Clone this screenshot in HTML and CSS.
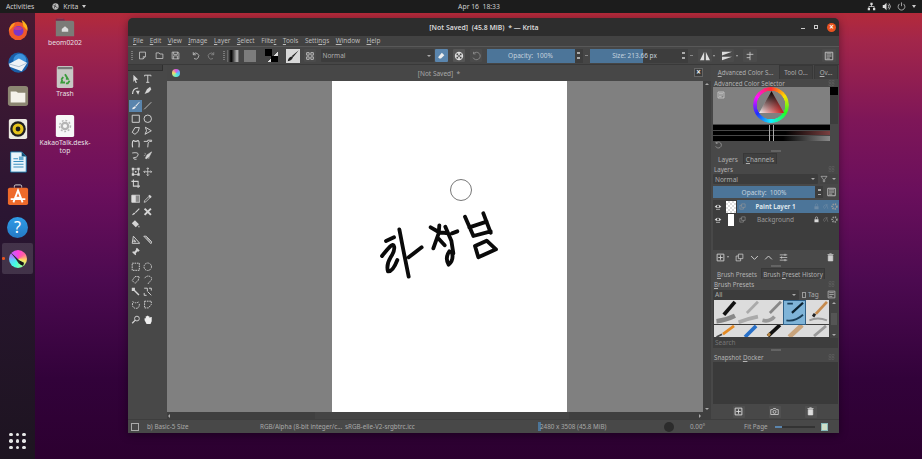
FILE: index.html
```html
<!DOCTYPE html>
<html lang="en">
<head>
<meta charset="utf-8">
<title>Krita</title>
<link rel="stylesheet" href="styles.css">
</head>
<body>
<svg class="defs" aria-hidden="true">
  <defs>
    <symbol id="i-new" viewBox="0 0 12 12"><path d="M2 1.500h8v6l-3 3H2zM7 10.500V7.500h3" fill="none" stroke="currentColor"/></symbol>
    <symbol id="i-open" viewBox="0 0 12 12"><path d="M1.500 2.500h4l1 1.500h4v6h-9z" fill="none" stroke="currentColor"/></symbol>
    <symbol id="i-save" viewBox="0 0 12 12"><path d="M1.500 1.500h8l1 1v8h-9zM3.500 1.500v3h5v-3M3.500 10.500v-4h5v4" fill="none" stroke="currentColor"/></symbol>
    <symbol id="i-undo" viewBox="0 0 12 12"><path d="M3 4.500a4 4 0 1 1 1 5.500M3 1.500v3.500h3.500" fill="none" stroke="currentColor"/></symbol>
    <symbol id="i-redo" viewBox="0 0 12 12"><path d="M9 4.500a4 4 0 1 0-1 5.500M9 1.500v3.500H5.500" fill="none" stroke="currentColor"/></symbol>
    <symbol id="i-grid" viewBox="0 0 12 12"><path d="M2 2h3v3H2zM7 2h3v3H7zM2 7h3v3H2zM7 7h3v3H7z" fill="none" stroke="currentColor"/></symbol>
    <symbol id="i-eye" viewBox="0 0 12 12"><path d="M1 5.500Q6 0 11 5.500Q6 9 1 5.500z" fill="currentColor"/><circle cx="6" cy="5" r="1.600" fill="#333"/><path d="M3 9.500h6" stroke="currentColor"/></symbol>
    <symbol id="i-lock" viewBox="0 0 12 12"><path d="M2.500 5.500h7v5h-7z" fill="currentColor"/><path d="M4 5.500V3.500a2 2 0 0 1 4 0v2" fill="none" stroke="currentColor"/></symbol>
    <symbol id="i-alpha" viewBox="0 0 12 12"><path d="M10 3Q6 2 3.500 4.500T4 9.500Q6.500 9 8 3l2 7" fill="none" stroke="currentColor"/></symbol>
    <symbol id="i-dots" viewBox="0 0 12 12"><circle cx="6" cy="6" r="4" fill="none" stroke="currentColor" stroke-dasharray="2 1.500" stroke-width="3"/></symbol>
    <symbol id="i-trash" viewBox="0 0 12 12"><path d="M3 3.500h6v7H3zM2 2h8M4.500 1h3" fill="currentColor" stroke="currentColor"/></symbol>
    <symbol id="i-plusbox" viewBox="0 0 12 12"><path d="M1.500 1.500h9v9h-9zM6 3v6M3 6h6" fill="none" stroke="currentColor" stroke-width="1.200"/></symbol>
    <symbol id="i-cam" viewBox="0 0 12 12"><path d="M1 3.500h2.500l1-1.500h3l1 1.500H11v6.500H1z" fill="none" stroke="currentColor"/><circle cx="6" cy="6.500" r="2" fill="none" stroke="currentColor"/></symbol>
    <symbol id="i-dock" viewBox="0 0 12 12"><path d="M1 1h4v4H1zM7 1h4v4H7zM1 7h4v4H1zM7 7h4v4H7z" fill="none" stroke="currentColor" stroke-dasharray="1.200 .8"/></symbol>
    <symbol id="i-refresh" viewBox="0 0 12 12"><path d="M2.500 8A4.500 4.500 0 1 0 3 3.200M3 1v2.500h2.500" fill="none" stroke="currentColor"/></symbol>
    <symbol id="i-copy" viewBox="0 0 12 12"><path d="M4.500 1.500h6v6h-6zM4.500 4h-3v6.500h6v-3" fill="none" stroke="currentColor"/></symbol>
    <symbol id="i-down" viewBox="0 0 12 12"><path d="M1.500 4l4.500 4.500L10.500 4" fill="none" stroke="currentColor" stroke-width="1.300"/></symbol>
    <symbol id="i-up" viewBox="0 0 12 12"><path d="M1.500 8.500L6 4l4.500 4.500" fill="none" stroke="currentColor" stroke-width="1.300"/></symbol>
    <symbol id="i-props" viewBox="0 0 12 12"><path d="M1 2.500h10M1 6h10M1 9.500h10M8 1v3M3.500 4.500v3M8 8v3" fill="none" stroke="currentColor"/></symbol>
    <symbol id="i-filter" viewBox="0 0 12 12"><path d="M1.500 2h9L7 6.500V10H5V6.500z" fill="none" stroke="currentColor"/></symbol>
    <symbol id="i-panel" viewBox="0 0 12 12"><path d="M1.500 1.500h9v9h-9zM3 3.500h6M3 6h6M3 8.500h4" fill="none" stroke="currentColor"/></symbol>

    <symbol id="t-arrow" viewBox="0 0 12 12"><path d="M3 1l6 6-3 .5 1.500 3.500-1.500.5L4.500 8 3 10z" fill="currentColor"/></symbol>
    <symbol id="t-text" viewBox="0 0 12 12"><path d="M2 3V1.500h8V3M6 1.500V10.500M4 10.500h4" fill="none" stroke="currentColor" stroke-width="1.200"/></symbol>
    <symbol id="t-bez" viewBox="0 0 12 12"><path d="M2 10Q2 3 9 2.500" fill="none" stroke="currentColor" stroke-width="1.500"/><path d="M6 6l5 0-2 5z" fill="currentColor"/></symbol>
    <symbol id="t-cal" viewBox="0 0 12 12"><path d="M2 10L5 4l4-3 1.500 3-3 4z" fill="currentColor"/></symbol>
    <symbol id="t-brush" viewBox="0 0 12 12"><path d="M10.500 1L5.500 6l1 1 4.500-5.500zM5 6.500L2 8.500 1.500 10.500 4 10l2.500-2.500z" fill="#eee"/></symbol>
    <symbol id="t-line" viewBox="0 0 12 12"><path d="M1.500 10.500l9-9" stroke="currentColor"/></symbol>
    <symbol id="t-rect" viewBox="0 0 12 12"><path d="M1.500 1.500h9v9h-9z" fill="none" stroke="currentColor" stroke-width="1.200"/></symbol>
    <symbol id="t-ell" viewBox="0 0 12 12"><circle cx="6" cy="6" r="4.700" fill="none" stroke="currentColor" stroke-width="1.200"/></symbol>
    <symbol id="t-poly" viewBox="0 0 12 12"><path d="M1.500 8L5 2h5.500L9 7l-4 3.500z" fill="none" stroke="currentColor" stroke-width="1.200"/></symbol>
    <symbol id="t-pline" viewBox="0 0 12 12"><path d="M3 1.500l7.500 4.500-8 4.500 2-4.500z" fill="none" stroke="currentColor" stroke-width="1.200"/></symbol>
    <symbol id="t-curve" viewBox="0 0 12 12"><path d="M2 10.500Q1 3 3 2q3 2 6 0 2 1 1 8.500" fill="none" stroke="currentColor" stroke-width="1.500"/></symbol>
    <symbol id="t-free" viewBox="0 0 12 12"><path d="M1 3h5V1.500h5V3H8.500L6.500 5 6 10.500" fill="none" stroke="currentColor" stroke-width="1.200"/></symbol>
    <symbol id="t-dyna" viewBox="0 0 12 12"><path d="M1.500 2.500Q10 1 9 5T3 8.500Q3 11 7 10.500" fill="none" stroke="currentColor" stroke-width="1.100"/></symbol>
    <symbol id="t-multi" viewBox="0 0 12 12"><path d="M11 1L5 5 3 9l1 1 4-3zM1 6l2-1M2 3l2 1M7 10l1-2" fill="currentColor" stroke="currentColor" stroke-width=".7"/></symbol>
    <symbol id="t-trans" viewBox="0 0 12 12"><path d="M2.500 2.500h7v7h-7z" fill="none" stroke="currentColor"/><path d="M1 1h3v3H1zM8 1h3v3H8zM1 8h3v3H1zM8 8h3v3H8zM5 5h2v2H5z" fill="currentColor"/></symbol>
    <symbol id="t-move" viewBox="0 0 12 12"><path d="M6 1v10M1 6h10M4.500 2.500L6 1l1.500 1.500M4.500 9.500L6 11l1.500-1.500M2.500 4.500L1 6l1.500 1.500M9.500 4.500L11 6 9.500 7.500" fill="none" stroke="currentColor"/></symbol>
    <symbol id="t-crop" viewBox="0 0 12 12"><path d="M3 .5V9h8.500M.5 3H9v8.500" fill="none" stroke="currentColor" stroke-width="1.300"/></symbol>
    <symbol id="t-grad" viewBox="0 0 12 12"><path d="M1 1.500h10v9H1z" fill="#888" stroke="currentColor"/><path d="M1 1.500h5v9H1z" fill="#ddd"/></symbol>
    <symbol id="t-drop" viewBox="0 0 12 12"><path d="M1.500 10.500L2 8.500l5-5 1.500 1.500-5 5z" fill="none" stroke="currentColor"/><path d="M6.500 2.500l3 3L11 3.500 8.500 1z" fill="currentColor"/></symbol>
    <symbol id="t-color" viewBox="0 0 12 12"><path d="M10 1.500L5 6.500l1 1 5-5zM4 7L1.500 9.500 2 10.500 5.500 8.500z" fill="currentColor"/></symbol>
    <symbol id="t-patch" viewBox="0 0 12 12"><path d="M2 2l8 8M10 2l-8 8" stroke="currentColor" stroke-width="2.500"/></symbol>
    <symbol id="t-fill" viewBox="0 0 12 12"><path d="M5 1.500l5 5-4 4-5-5zM10 8l1 2.500h-2z" fill="currentColor"/></symbol>
    <symbol id="t-assist" viewBox="0 0 12 12"><path d="M1.500 10.500L3 1.500l8 9zM3.500 8.500h2.500l-2-2.500z" fill="none" stroke="currentColor" stroke-width="1.200"/></symbol>
    <symbol id="t-meas" viewBox="0 0 12 12"><path d="M1 1.500h3l7 7-1 2.500zM4 3L9.500 9" fill="none" stroke="currentColor" stroke-width="1.200"/></symbol>
    <symbol id="t-ref" viewBox="0 0 12 12"><path d="M7.500 1L11 4.500 9.500 6 8.500 5.500 6 8l.5 1.500-1 1-4-4 1-1L4 6l2.500-2.500L6 2.500zM3 8L1 11" fill="currentColor"/></symbol>
    <symbol id="s-rect" viewBox="0 0 12 12"><path d="M1.500 1.500h9v9h-9z" fill="none" stroke="currentColor" stroke-dasharray="2 1" stroke-width="1.200"/></symbol>
    <symbol id="s-ell" viewBox="0 0 12 12"><circle cx="6" cy="6" r="4.700" fill="none" stroke="currentColor" stroke-dasharray="2 1" stroke-width="1.200"/></symbol>
    <symbol id="s-poly" viewBox="0 0 12 12"><path d="M1.500 7L5 2h5.500L9 7l-4 3.500z" fill="none" stroke="currentColor" stroke-dasharray="2 1" stroke-width="1.200"/></symbol>
    <symbol id="s-free" viewBox="0 0 12 12"><path d="M2 4Q5 0 9 2t0 6 -2 3" fill="none" stroke="currentColor" stroke-dasharray="2 1" stroke-width="1.200"/></symbol>
    <symbol id="s-wand" viewBox="0 0 12 12"><path d="M1 1h4v4H1z" fill="currentColor"/><path d="M4 4l6 6" stroke="currentColor" stroke-width="1.800"/></symbol>
    <symbol id="s-sim" viewBox="0 0 12 12"><path d="M1.500 1.500h4v4M6 6l4.500 4.500M7.500 1.500h3v3M1.500 7.500v3h3" fill="none" stroke="currentColor" stroke-width="1.200"/></symbol>
    <symbol id="s-bez" viewBox="0 0 12 12"><path d="M2 4Q1 10 6 10.500T10.500 4M2 2q4 3 8.500 0" fill="none" stroke="currentColor" stroke-dasharray="2 1" stroke-width="1.200"/></symbol>
    <symbol id="s-mag" viewBox="0 0 12 12"><path d="M2 1.500h8.500v4L7 10H2z" fill="none" stroke="currentColor" stroke-dasharray="2 1" stroke-width="1.200"/></symbol>
    <symbol id="t-zoom" viewBox="0 0 12 12"><circle cx="7.500" cy="4.500" r="3" fill="none" stroke="currentColor" stroke-width="1.200"/><path d="M5.500 6.500L1.500 10.500" stroke="currentColor" stroke-width="1.600"/></symbol>
    <symbol id="t-pan" viewBox="0 0 12 12"><path d="M2 6.500V4h1.500V1.500H5V1h1.500v.5H8V3h1.500v-.5H11V8l-1.500 3.500h-5z" fill="#eee"/></symbol>
  </defs>
</svg>

<header class="topbar">
  <div class="top-left">
    <span class="top-item">Activities</span>
    <span class="top-item app">
      <svg class="app-globe" viewBox="0 0 10 10"><circle cx="5" cy="5" r="4.500" fill="#bbb"/><path d="M2 3l6 4M3 8l2-6" stroke="#333"/></svg>
      Krita <i class="caret"></i>
    </span>
  </div>
  <div class="top-clock">Apr 16&nbsp; 18:33</div>
  <div class="top-right">
    <svg class="tray" viewBox="0 0 12 12"><path d="M4.500 1h3v3h-3zM1 8h3v3H1zM8 8h3v3H8z" fill="#ddd"/><path d="M6 4v2M2.500 8V6h7v2" stroke="#ddd" fill="none"/></svg>
    <svg class="tray" viewBox="0 0 12 12"><path d="M1 4h2l3-3v10L3 8H1z" fill="#ddd"/><path d="M8 3.500a4 4 0 0 1 0 5M9.500 2a6 6 0 0 1 0 8" stroke="#ddd" fill="none"/></svg>
    <svg class="tray" viewBox="0 0 12 12"><path d="M3.500 2.500a4.500 4.500 0 1 0 5 0M6 .5v5" stroke="#ccc" fill="none"/></svg>
    <i class="caret"></i>
  </div>
</header>

<div class="screen">
  <nav class="dock">
    <div class="dock-item"><svg viewBox="0 0 24 24"><circle cx="12" cy="13" r="10" fill="#f0592b"/><path d="M16 1q7 4 6.500 12L18 8z" fill="#ffb31a"/><path d="M2 13Q3 5 9 4l-2 4z" fill="#ff9b1f"/><circle cx="12.500" cy="13" r="5.500" fill="#7b36c9"/><path d="M7 10q5-3 10 0l-2 2H9z" fill="#c23a90"/></svg></div>
    <div class="dock-item"><svg viewBox="0 0 24 24"><circle cx="12.500" cy="11.500" r="11" fill="#1a5fa8"/><circle cx="14" cy="9" r="7" fill="#3c93dc"/><path d="M2 13l11-6 9 5-6 9-13-5z" fill="#eef2f6"/><path d="M2 13l11 3 9-4" fill="none" stroke="#a9bdd0"/></svg></div>
    <div class="dock-item"><svg viewBox="0 0 24 24"><rect x="1" y="1" width="22" height="22" rx="3" fill="#8c8672"/><path d="M4 7h6l2 1.500h8V19H4z" fill="#f4f1ea"/></svg></div>
    <div class="dock-item"><svg viewBox="0 0 24 24"><rect x="2" y="1" width="20" height="22" rx="2" fill="#eceae2"/><circle cx="12" cy="12" r="8.500" fill="#1e1e1e"/><circle cx="12" cy="12" r="6" fill="#e6c41c"/><circle cx="12" cy="12" r="2.600" fill="#1e1e1e"/></svg></div>
    <div class="dock-item"><svg viewBox="0 0 24 24"><path d="M4 1h12l5 5v17H4z" fill="#e9f4fb" stroke="#1c78ad"/><path d="M16 1l5 5h-5z" fill="#0d4f78"/><path d="M7 8h5v1H7zM7 11h11v1H7zM7 14h11v1H7zM7 17h11v1H7z" fill="#3c8fc0"/><path d="M13 6h5v4h-5z" fill="#65a9d0"/></svg></div>
    <div class="dock-item"><svg viewBox="0 0 24 24"><path d="M8 4V2.500a1.500 1.500 0 0 1 1.500-1.500h5A1.500 1.500 0 0 1 16 2.500V4" fill="none" stroke="#ddd"/><rect x="1" y="4" width="22" height="19" rx="2" fill="#ee6a2b"/><path d="M7 20l5-13 5 13M8 15h8M4 16.500h16" stroke="#fff" stroke-width="2" fill="none"/></svg></div>
    <div class="dock-item help"><span class="help-mark">?</span></div>
    <div class="dock-item active"><i class="run-dot"></i><span class="krita-wheel"><svg viewBox="0 0 24 24"><path d="M1 2l13 12 5 4-1 3-5-3-4-6z" fill="#2b2b2b"/><path d="M14 14l6 3-1 4-4-2z" fill="#111"/></svg></span></div>
    <div class="dock-spacer"></div>
    <div class="apps-grid"><i></i><i></i><i></i><i></i><i></i><i></i><i></i><i></i><i></i></div>
  </nav>

  <main class="desktop">
    <div class="desk-icons">
      <div class="desk-icon">
        <svg class="desk-pic" viewBox="0 0 24 24"><path d="M2 4Q2 2 4 2h6l2 2h8q2 0 2 2v15H2z" fill="#7b7b77"/><path d="M2 2h9l1 2H2z" fill="#7d2a4c"/><path d="M8.500 13l3.500-3 3.500 3v3h-7z" fill="#ddd"/></svg>
        <span>beom0202</span>
      </div>
      <div class="desk-icon">
        <svg class="desk-pic" viewBox="0 0 24 24"><rect x="3" y="0" width="18" height="24" rx="2" fill="#c8c8c4"/><rect x="4" y="1" width="16" height="2.500" fill="#777"/><path d="M12 9l3 5h-2M9 15l-1 3h4M17 16l-2 3h-2M10 12l-2 3" stroke="#3a9b3a" stroke-width="2" fill="none"/></svg>
        <span>Trash</span>
      </div>
      <div class="desk-icon kakao">
        <svg class="desk-pic" viewBox="0 0 24 24"><rect x="2" y="0" width="20" height="24" rx="2" fill="#f7f7f7"/><circle cx="12" cy="12" r="3.500" fill="none" stroke="#b5b5b5" stroke-width="2.500"/><circle cx="12" cy="12" r="6" fill="none" stroke="#b5b5b5" stroke-width="1.500" stroke-dasharray="2 2"/></svg>
        <span>KakaoTalk.desk-<br>top</span>
      </div>
    </div>

    <section class="window">
      <div class="titlebar">
        <span class="title">[Not Saved]&nbsp; (45.8 MiB)&nbsp; * — Krita</span>
        <div class="win-btns">
          <i class="wb-min"></i><i class="wb-max"></i>
          <span class="wb-close">×</span>
        </div>
      </div>
      <div class="menubar">
        <span><u>F</u>ile</span><span><u>E</u>dit</span><span><u>V</u>iew</span><span><u>I</u>mage</span><span><u>L</u>ayer</span><span><u>S</u>elect</span><span>Filte<u>r</u></span><span><u>T</u>ools</span><span>Setti<u>n</u>gs</span><span><u>W</u>indow</span><span><u>H</u>elp</span>
      </div>
      <div class="toolbar">
        <i class="grip"></i>
        <svg class="tb-ic tb-first"><use href="#i-new"/></svg>
        <svg class="tb-ic"><use href="#i-open"/></svg>
        <svg class="tb-ic"><use href="#i-save"/></svg>
        <svg class="tb-ic tb-sep"><use href="#i-undo"/></svg>
        <svg class="tb-ic dim"><use href="#i-redo"/></svg>
        <i class="grip grip2"></i>
        <i class="tb-swatch tb-grad"></i>
        <i class="tb-swatch tb-patt"></i>
        <span class="fgbg"><i class="fg"></i><i class="bg"></i></span>
        <span class="tb-preset"><svg viewBox="0 0 12 12"><path d="M11 1L5 6l1 1zM5 6.500Q2 7 1.500 10.500 5 10 6 7z" fill="#222"/></svg></span>
        <span class="tb-btn"><svg class="tb-ic"><use href="#i-grid"/></svg></span>
        <span class="combo tb-combo">Normal<i class="dn"></i></span>
        <span class="tb-btn blue"><svg viewBox="0 0 12 12"><path d="M7 2l3 3-4 4H4L2.500 7.500z" fill="#eee"/></svg></span>
        <span class="tb-btn lift"><svg viewBox="0 0 12 12"><circle cx="6" cy="6" r="5" fill="#ddd"/><path d="M3 3h2v2H3zM7 3h2v2H7zM5 5h2v2H5zM3 7h2v2H3zM7 7h2v2H7z" fill="#444"/></svg></span>
        <span class="tb-btn"><svg class="tb-ic dim"><use href="#i-refresh"/></svg></span>
        <span class="slider op">Opacity:&nbsp; 100%</span><span class="spin"><i></i><i></i></span><b class="dash"></b>
        <span class="slider size"><i class="size-fill"></i><span>Size: 213.66 px</span></span><span class="spin"><i></i><i></i></span><b class="dash"></b>
        <span class="tb-btn mirror"><svg viewBox="0 0 14 12"><path d="M6 1v10H1zM8 1v10h5z" fill="#ddd"/></svg></span><i class="dn sm"></i>
        <span class="tb-btn mirror"><svg viewBox="0 0 14 12"><path d="M1 1h12L1 5.500zM1 7h12L1 11z" fill="#ddd"/></svg></span><i class="dn sm"></i>
        <span class="tb-btn mirror"><svg viewBox="0 0 14 12"><path d="M7 1v10M3 4h8M3 8h4" stroke="#ccc" fill="none"/></svg></span>
        <span class="tb-spring"></span>
        <span class="tb-btn mirror"><svg class="tb-ic"><use href="#i-panel"/></svg></span>
      </div>

      <div class="work">
        <aside class="tools">
          <div class="tools-tab"></div>
          <div class="tgroup">
            <svg><use href="#t-arrow"/></svg><svg><use href="#t-text"/></svg>
            <svg><use href="#t-bez"/></svg><svg><use href="#t-cal"/></svg>
          </div>
          <div class="tgroup">
            <span class="t-on"><svg><use href="#t-brush"/></svg></span><svg><use href="#t-line"/></svg>
            <svg><use href="#t-rect"/></svg><svg><use href="#t-ell"/></svg>
            <svg><use href="#t-poly"/></svg><svg><use href="#t-pline"/></svg>
            <svg><use href="#t-curve"/></svg><svg><use href="#t-free"/></svg>
            <svg><use href="#t-dyna"/></svg><svg><use href="#t-multi"/></svg>
          </div>
          <div class="tgroup">
            <svg><use href="#t-trans"/></svg><svg><use href="#t-move"/></svg>
            <svg><use href="#t-crop"/></svg>
          </div>
          <div class="tgroup">
            <svg><use href="#t-grad"/></svg><svg><use href="#t-drop"/></svg>
            <svg><use href="#t-color"/></svg><svg><use href="#t-patch"/></svg>
            <svg><use href="#t-fill"/></svg>
          </div>
          <div class="tgroup">
            <svg><use href="#t-assist"/></svg><svg><use href="#t-meas"/></svg>
            <svg><use href="#t-ref"/></svg>
          </div>
          <div class="tgroup">
            <svg><use href="#s-rect"/></svg><svg><use href="#s-ell"/></svg>
            <svg><use href="#s-poly"/></svg><svg><use href="#s-free"/></svg>
            <svg><use href="#s-wand"/></svg><svg><use href="#s-sim"/></svg>
            <svg><use href="#s-bez"/></svg><svg><use href="#s-mag"/></svg>
          </div>
          <div class="tgroup">
            <svg><use href="#t-zoom"/></svg><svg><use href="#t-pan"/></svg>
          </div>
        </aside>

        <div class="center">
          <div class="tabbar">
            <i class="tab-ic"></i>
            <span class="tab-name">[Not Saved] &nbsp;*</span>
            <span class="tab-close">×</span>
          </div>
          <div class="canvas-row">
            <div class="canvas">
              <div class="page">
                <svg class="cursor" viewBox="0 0 24 24"><circle cx="12" cy="12" r="10.500" fill="none" stroke="#777"/></svg>
                <svg class="ink" viewBox="0 0 420 345">
                  <path d="M48 213L72 202M36 258Q50 240 60 230T72 228Q76 240 62 262 48 285 54 304 68 306 82 270M88 178L100 240 116 320M116 262L155 232"/>
                  <path d="M182 172L206 186 234 190M208 166L206 190 190 235M206 206L224 226M226 170L244 212 250 250M246 190L262 184M238 244Q224 264 236 284 252 270 246 248"/>
                  <path d="M285 140L310 197M340 130L362 188M298 172L350 155M310 198L362 184M315 228L325 262 378 238 350 212 315 228"/>
                </svg>
              </div>
            </div>
            <div class="vscroll"><i class="arr-up"></i><i class="arr-dn"></i></div>
          </div>
          <div class="hscroll"><i class="arr-l"></i><i class="thumb"></i><i class="arr-r"></i></div>
        </div>

        <aside class="panel">
          <div class="tabs tabs-top">
            <span class="tab cur"><span><u>A</u>dvanced Color S...</span></span>
            <span class="tab">Tool O...</span>
            <span class="tab"><u>O</u>v...</span>
          </div>
          <div class="dock-head h-8"><span><u>A</u>dvanced Color Selector</span><svg><use href="#i-dock"/></svg></div>
          <div class="selector">
            <div class="sel-main">
              <svg class="sel-menu"><use href="#i-panel"/></svg>
              <div class="wheel"></div>
              <svg class="tri" viewBox="0 0 26 23">
                <defs>
                  <linearGradient id="tg1" x1="0" x2="1" y1="0" y2="0"><stop offset="0" stop-color="#f4f4f4"/><stop offset="1" stop-color="#d01818"/></linearGradient>
                  <linearGradient id="tg2" x1="0" x2="0" y1="0" y2="1"><stop offset="0" stop-color="#000"/><stop offset="1" stop-color="#000" stop-opacity="0"/></linearGradient>
                </defs>
                <path d="M13 0L26 23H0z" fill="url(#tg1)"/><path d="M13 0L26 23H0z" fill="url(#tg2)"/>
              </svg>
            </div>
            <div class="sel-side"></div>
          </div>
          <div class="sel-bars">
            <i class="bar b1"></i><i class="bar b2"></i><i class="bar b3"></i>
            <i class="bar-mark"></i>
          </div>
          <div class="sel-foot"><svg><use href="#i-refresh"/></svg></div>
          <i class="handle"></i>

          <div class="tabs tabs-mid">
            <span class="tab cur">Layers</span>
            <span class="tab"><u>C</u>hannels</span>
          </div>
          <div class="dock-head h-10"><span>Layers</span><svg><use href="#i-dock"/></svg></div>
          <div class="layer-opts">
            <span class="combo lay-combo">Normal<i class="dn"></i></span>
            <span class="filter"><svg><use href="#i-filter"/></svg><i class="dn"></i></span>
          </div>
          <div class="lay-op">
            <span class="slider lay-slider">Opacity:&nbsp; 100%</span>
            <span class="spin"><i></i><i></i></span>
            <svg class="lay-panel"><use href="#i-panel"/></svg>
          </div>
          <div class="layers">
            <div class="layer sel">
              <svg class="eye"><use href="#i-eye"/></svg>
              <span class="thumbn check"></span>
              <svg class="lic"><use href="#i-copy"/></svg>
              <span class="lname strong">Paint Layer 1</span>
              <svg class="lic dimmer"><use href="#i-lock"/></svg>
              <svg class="lic dimmer"><use href="#i-alpha"/></svg>
              <svg class="lic"><use href="#i-dots"/></svg>
            </div>
            <div class="layer">
              <svg class="eye"><use href="#i-eye"/></svg>
              <span class="thumbn white"></span>
              <svg class="lic"><use href="#i-copy"/></svg>
              <span class="lname">Background</span>
              <svg class="lic bright"><use href="#i-lock"/></svg>
              <svg class="lic dimmer"><use href="#i-alpha"/></svg>
              <svg class="lic"><use href="#i-dots"/></svg>
            </div>
          </div>
          <div class="lay-actions">
            <svg><use href="#i-plusbox"/></svg><i class="dn sm"></i>
            <svg><use href="#i-copy"/></svg>
            <svg><use href="#i-down"/></svg>
            <svg><use href="#i-up"/></svg>
            <svg><use href="#i-props"/></svg>
            <span class="tb-spring"></span>
            <svg><use href="#i-trash"/></svg>
          </div>
          <i class="handle"></i>

          <div class="tabs tabs-brush">
            <span class="tab cur"><span><u>B</u>rush Presets</span></span>
            <span class="tab"><span>Brush <u>P</u>reset History</span></span>
          </div>
          <div class="dock-head h-10"><span><u>B</u>rush Presets</span><svg><use href="#i-dock"/></svg></div>
          <div class="preset-opts">
            <span class="combo pr-combo">All<i class="dn"></i></span>
            <span class="tag"><i class="tag-box"></i>Tag</span>
            <svg class="pr-ic"><use href="#i-panel"/></svg>
          </div>
          <div class="presets">
            <div class="pr-grid">
              <span class="pr"><svg viewBox="0 0 23 26"><path d="M22 2L10 16" stroke="#111" stroke-width="4"/><path d="M2 23Q12 22 22 17" stroke="#888" stroke-width="5" fill="none"/></svg></span>
              <span class="pr"><svg viewBox="0 0 23 26"><path d="M22 2L10 14" stroke="#aaa" stroke-width="3"/><path d="M1 24Q12 20 22 18" stroke="#aaa" stroke-width="4" fill="none"/></svg></span>
              <span class="pr"><svg viewBox="0 0 23 26"><path d="M22 2L10 14" stroke="#888" stroke-width="3"/><path d="M2 22Q10 24 15 18" stroke="#999" stroke-width="4" fill="none"/></svg></span>
              <span class="pr on"><svg viewBox="0 0 23 26"><path d="M21 3L9 14" stroke="#0c2230" stroke-width="2.500"/><path d="M4 4h6M3 22Q12 24 21 16" stroke="#1a3e58" stroke-width="2" fill="none"/></svg></span>
              <span class="pr"><svg viewBox="0 0 23 26"><path d="M22 2L10 15" stroke="#c58a4d" stroke-width="3"/><path d="M9 15l-2 3" stroke="#222" stroke-width="3"/><path d="M3 22Q12 18 22 22" stroke="#999" stroke-width="2" fill="none"/></svg></span>
              <span class="pr"><svg viewBox="0 0 23 13"><path d="M21 1L9 10" stroke="#e48a24" stroke-width="3"/><path d="M8 10L2 13" stroke="#444" stroke-width="2"/></svg></span>
              <span class="pr"><svg viewBox="0 0 23 13"><path d="M20 1L8 13" stroke="#2870c8" stroke-width="4"/></svg></span>
              <span class="pr"><svg viewBox="0 0 23 13"><path d="M21 0L8 12" stroke="#111" stroke-width="4"/><path d="M10 9l-2 3" stroke="#b84" stroke-width="3"/></svg></span>
              <span class="pr"><svg viewBox="0 0 23 13"><path d="M20 0L6 13" stroke="#c9a47c" stroke-width="5"/></svg></span>
              <span class="pr"><svg viewBox="0 0 23 13"><path d="M21 1L8 12" stroke="#999" stroke-width="3"/></svg></span>
            </div>
            <div class="pr-scroll"><i class="arr-up"></i><i class="pr-thumb"></i><i class="arr-dn"></i></div>
          </div>
          <div class="search">Search</div>
          <i class="handle"></i>
          <div class="dock-head h-10"><span>Snapshot <u>D</u>ocker</span><svg><use href="#i-dock"/></svg></div>
          <div class="snapshots"></div>
          <div class="snap-actions">
            <span class="snap-btn"><svg><use href="#i-plusbox"/></svg></span>
            <span class="snap-btn"><svg><use href="#i-cam"/></svg></span>
            <span class="snap-btn"><svg><use href="#i-trash"/></svg></span>
          </div>
        </aside>
      </div>

      <footer class="status">
        <span class="st-ic"></span>
        <span class="st-brush">b) Basic-5 Size</span>
        <span class="st-space">RGB/Alpha (8-bit integer/c...</span>
        <span class="st-prof">sRGB-elle-V2-srgbtrc.icc</span>
        <span class="st-dim"><i></i>2480 x 3508 (45.8 MiB)</span>
        <span class="st-rot"><i></i></span>
        <span class="st-ang">0.00°</span>
        <span class="st-fit">Fit Page</span>
        <span class="st-zoom"><i></i></span>
        <span class="st-map"></span>
      </footer>
    </section>
  </main>
</div>
</body>
</html>
```

FILE: styles.css
```css
* { box-sizing: border-box; }
html, body { margin: 0; width: 922px; height: 459px; overflow: hidden; }
body {
  font-family: "Noto Sans", "Open Sans", sans-serif;
  font-size: 6.5px;
  color: #c4c4c4;
  display: flex;
  flex-direction: column;
  background: #300030;
}
i, b { display: block; font-style: normal; }
u { text-decoration: underline; text-underline-offset: 1px; text-decoration-thickness: .5px; }
.defs { position: absolute; width: 0; height: 0; }

/* top bar */
.topbar {
  height: 13px;
  flex: none;
  background: #1c1c1c;
  color: #d0d0d0;
  font-size: 6.8px;
  display: grid;
  grid-template-columns: 1fr auto 1fr;
  align-items: center;
  padding: 0 6px;
}
.top-left { display: flex; align-items: center; gap: 18px; }
.top-item { display: flex; align-items: center; gap: 3px; }
.app-globe { width: 7px; height: 7px; margin-right: 1px; }
.caret { width: 0; height: 0; border: 2.5px solid transparent; border-top: 3px solid #ccc; border-bottom: 0; }
.top-item .caret { margin-left: 1px; }
.top-clock { margin-left: 36px; }
.top-right { display: flex; align-items: center; justify-content: flex-end; gap: 6px; }
.tray { width: 9px; height: 9px; }

/* screen */
.screen { flex: 1; display: flex; min-height: 0; }
.dock {
  width: 35px;
  flex: none;
  background: linear-gradient(180deg, #461a32 0, #2a1532 45%, #1d1420 100%);
  display: flex;
  flex-direction: column;
  align-items: center;
}
.dock-item {
  width: 31px;
  height: 33px;
  flex: none;
  display: flex;
  align-items: center;
  justify-content: center;
  position: relative;
}
.dock-item svg { width: 22px; height: 22px; }
.help-mark {
  width: 21px;
  height: 21px;
  border-radius: 50%;
  background: linear-gradient(180deg, #2f9ce8, #2579c4);
  color: #fff;
  font-size: 16px;
  line-height: 21px;
  text-align: center;
}
.dock-item.active { height: 31px; margin-top: -1px; background: rgba(255, 255, 255, .13); border-radius: 2px; }
.run-dot { position: absolute; left: 0; top: 14px; width: 2.5px; height: 2.5px; border-radius: 50%; background: #e95420; }
.krita-wheel {
  width: 18px;
  height: 18px;
  border-radius: 50%;
  background: conic-gradient(#ff40e0, #ff60a0, #ffe060, #90ffa0, #40ffe0, #60d0ff, #c060ff, #ff40e0);
  display: block;
}
.krita-wheel svg { width: 18px; height: 18px; display: block; }
.dock-spacer { flex: 1; }
.apps-grid {
  display: grid;
  grid-template-columns: repeat(3, 3.5px);
  gap: 3px;
  margin-bottom: 10px;
}
.apps-grid i { height: 3.5px; border-radius: 50%; background: #e8e8e8; }

.desktop {
  flex: 1;
  position: relative;
  background:
    linear-gradient(180deg, #b32a3a 0, #a3264a 6%, #7e1658 24%, #6a0f5c 40%, #4c0a50 60%, #32023a 82%, #2c0030 100%);
}
.desk-icons {
  width: 60px;
  padding-top: 4px;
  display: flex;
  flex-direction: column;
  align-items: center;
}
.desk-icon {
  height: 49px;
  display: flex;
  flex-direction: column;
  align-items: center;
  text-align: center;
  color: #e6e0e6;
  font-size: 6.8px;
  line-height: 8px;
}
.desk-pic { width: 22px; height: 22px; margin-bottom: 2px; flex: none; }
.desk-icon:first-child .desk-pic { margin-bottom: 0; }

/* window */
.window {
  position: absolute;
  left: 93px;
  top: 5px;
  width: 711px;
  height: 415px;
  background: #484848;
  border-radius: 5px 5px 0 0;
  box-shadow: 0 2px 8px rgba(0, 0, 0, .4);
  display: flex;
  flex-direction: column;
  overflow: hidden;
}
.titlebar {
  height: 18px;
  flex: none;
  background: #2d2d2d;
  position: relative;
  display: flex;
  align-items: center;
  justify-content: center;
  font-size: 6.9px;
  font-weight: 600;
  color: #d8d8d8;
}
.title { margin-left: 1px; }
.win-btns {
  position: absolute;
  right: 3px;
  top: 0;
  height: 18px;
  display: flex;
  align-items: center;
  gap: 9px;
}
.wb-min { width: 4px; height: 1px; background: #ccc; margin-top: 3px; }
.wb-max { width: 4.5px; height: 4.5px; border: 1px solid #ccc; }
.wb-close {
  width: 9px;
  height: 9px;
  border-radius: 50%;
  background: #e95420;
  color: #fff;
  font-size: 8px;
  line-height: 8px;
  text-align: center;
}
.menubar {
  height: 10px;
  flex: none;
  display: flex;
  align-items: center;
  gap: 6.5px;
  padding: 0 5px;
  background: #424242;
  color: #bcbcbc;
  font-size: 6.4px;
  line-height: 10px;
}
.toolbar {
  height: 19px;
  flex: none;
  display: flex;
  align-items: center;
  padding-left: 3px;
  background: #464646;
  border-top: 1px solid #585858;
  border-bottom: 1px solid #393939;
  color: #cfcfcf;
}
.grip { width: 2px; height: 9px; margin-right: 1px; background: repeating-linear-gradient(180deg, #7a7a7a 0 1px, transparent 1px 2px); flex: none; }
.tb-ic { width: 9px; height: 9px; flex: none; margin-right: 7.5px; color: #cfcfcf; }
.tb-first { margin-left: 4px; }
.tb-sep { margin-left: 3px; }
.tb-ic.dim { color: #8f8f8f; }
.grip2 { margin-left: -1px; margin-right: 2px; }
.tb-swatch { width: 12px; height: 12px; flex: none; margin-right: 5px; }
.tb-grad { background: linear-gradient(90deg, #777, #000 35%, #bbb 85%, #555); }
.tb-patt { background: #7c7c7c; margin-right: 9px; }
.fgbg { width: 13px; height: 13px; flex: none; position: relative; margin-right: 8px; background: linear-gradient(135deg, transparent 60%, #ddd 60%); }
.fg, .bg { position: absolute; background: #000; }
.fg { left: 0; top: 0; width: 7px; height: 7px; }
.bg { right: 0; bottom: 0; width: 7px; height: 6px; }
.tb-preset { width: 14px; height: 14px; flex: none; background: #d8d8d8; margin-right: 4px; }
.tb-preset svg { display: block; width: 14px; height: 14px; }
.tb-btn { width: 12px; height: 13px; flex: none; display: flex; align-items: center; justify-content: center; margin-right: 5px; border-radius: 1px; background: #4b4b4b; }
.tb-btn svg { width: 10px; height: 10px; margin: 0; }
.tb-btn.blue { width: 13px; background: #5a85ad; }
.tb-btn.lift { background: #565656; }
.combo { display: flex; align-items: center; justify-content: space-between; background: #3c3c3c; color: #aeaeae; padding: 0 3px 0 2px; border-radius: 1px; }
.dn { width: 0; height: 0; border: 2px solid transparent; border-top: 2.5px solid #aaa; border-bottom: 0; flex: none; }
.dn.sm { border-width: 1.7px; border-top-width: 2px; border-bottom-width: 0; }
.tb-combo { width: 113px; height: 13px; flex: none; margin: 0 1px 0 0; }
.slider { display: flex; align-items: center; justify-content: center; background: #4c7599; color: #c4d2de; position: relative; }
.slider.op { width: 88px; height: 14px; flex: none; }
.spin { width: 8px; height: 14px; flex: none; display: flex; flex-direction: column; align-items: center; justify-content: space-evenly; background: #3d3d3d; }
.spin i { width: 3px; height: 1.5px; background: #aaa; }
.dash { width: 3px; height: 1px; background: #888; flex: none; margin: 0 2px; }
.slider.size { width: 90px; height: 14px; flex: none; background: #3d3d3d; color: #c4d2de; }
.slider.size span { position: relative; }
.size-fill { position: absolute; left: 0; top: 0; bottom: 0; width: 53px; background: #4c7599; }
.tb-btn.mirror { width: 14px; margin: 0 1.5px 0 3px; }
.tb-btn.mirror svg { width: 12px; }
.toolbar .dn.sm { margin-right: 2px; }
.tb-spring { flex: 1; }
.toolbar > .tb-btn:last-child { margin-right: 3px; }

/* middle */
.work { flex: 1; display: flex; min-height: 0; background: #484848; }
.tools { width: 39px; flex: none; padding: 0 4px 0 1px; display: flex; flex-direction: column; color: #d4d4d4; }
.tools-tab { height: 6px; margin: 0 0 1px -1px; width: 35px; background: #3f3f3f; border-right: 1px solid #2f2f2f; border-bottom: 1px solid #2f2f2f; flex: none; }
.tgroup { display: grid; grid-template-columns: 12.5px 12.5px; grid-auto-rows: 12.5px; justify-items: center; align-items: center; margin-bottom: 2.8px; }
.tgroup svg { width: 9.5px; height: 9.5px; display: block; }
.t-on { width: 12.5px; height: 12px; background: #5a85ad; display: flex; align-items: center; justify-content: center; }

.center { flex: 1; min-width: 0; display: flex; flex-direction: column; }
.tabbar { height: 16px; flex: none; position: relative; display: flex; align-items: center; justify-content: center; background: #474747; color: #a8a8a8; }
.tab-ic { position: absolute; left: 5px; top: 4px; width: 8px; height: 8px; border-radius: 50%; background: conic-gradient(#e050e0, #50c0ff, #60f0d0, #f0e060, #e050e0); }
.tab-close { position: absolute; right: 8px; top: 3px; width: 9px; height: 9px; background: #3a3a3a; border: 1px solid #666; color: #eee; font-size: 8px; line-height: 6px; text-align: center; font-weight: 700; }
.canvas-row { flex: 1; min-height: 0; display: flex; }
.canvas { flex: 1; background: #808080; padding-left: 165px; min-width: 0; }
.page { width: 235px; height: 100%; background: #fff; position: relative; }
.cursor { position: absolute; left: 117px; top: 97px; width: 24px; height: 24px; }
.ink { position: absolute; left: 38px; top: 89px; width: 140px; height: 115px; }
.ink path { fill: none; stroke: #0a0a0a; stroke-width: 11.5; stroke-linecap: round; stroke-linejoin: round; }
.vscroll { width: 8px; flex: none; background: #3f3f3f; display: flex; flex-direction: column; align-items: center; justify-content: space-between; padding: 2px 0; }
.arr-up { width: 0; height: 0; border: 2px solid transparent; border-bottom: 2px solid #aaa; border-top: 0; }
.arr-dn { width: 0; height: 0; border: 2px solid transparent; border-top: 2px solid #aaa; border-bottom: 0; }
.hscroll { height: 7px; flex: none; background: #3f3f3f; display: flex; align-items: center; padding: 0 10px 0 1px; }
.arr-l { width: 0; height: 0; border: 2px solid transparent; border-right: 2px solid #aaa; border-left: 0; }
.arr-r { width: 0; height: 0; border: 2px solid transparent; border-left: 2px solid #aaa; border-right: 0; }
.hscroll .thumb { flex: 1; height: 7px; margin: 0 130px 0 145px; background: #444; }

/* right panel */
.panel { width: 128px; flex: none; display: flex; flex-direction: column; background: #484848; color: #b4b4b4; padding: 0 1px 0 2px; }
.tabs { display: flex; flex: none; align-items: flex-end; white-space: nowrap; }
.tab { display: flex; align-items: center; justify-content: center; height: 100%; flex: none; color: #b0b0b0; background: #3f3f3f; border: 1px solid #383838; border-bottom: 0; }
.tab.cur { background: #484848; border-color: transparent; }
.tabs-top { height: 14px; gap: 1px; font-size: 6.2px; }
.tabs-top .tab.cur { width: 65px; }
.tabs-top .tab:nth-child(2) { width: 34px; }
.tabs-top .tab:nth-child(3) { width: 24px; }
.tabs-mid { height: 11px; }
.tabs-mid .tab.cur { width: 30px; }
.tabs-mid .tab:nth-child(2) { width: 34px; }
.tabs-brush { height: 11px; font-size: 6.2px; }
.tabs-brush .tab.cur { width: 48px; }
.tabs-brush .tab:nth-child(2) { width: 64px; }
.dock-head { display: flex; align-items: center; justify-content: space-between; padding: 0 1px; flex: none; font-size: 6.2px; }
.dock-head svg { width: 11px; height: 6px; color: #777; }
.h-8 { height: 8px; }
.h-10 { height: 10px; }
.selector { height: 37px; flex: none; display: flex; }
.sel-main { flex: 1; background: #808080; position: relative; }
.sel-menu { position: absolute; left: 4px; top: 4px; width: 8px; height: 8px; color: #ddd; }
.wheel {
  position: absolute;
  left: 40px;
  top: 0;
  width: 36px;
  height: 36px;
  border-radius: 50%;
  background: conic-gradient(#ff3030, #ffe000 16%, #20ff20 33%, #10f0ff 50%, #2030ff 66%, #ff10ff 83%, #ff3030);
  -webkit-mask: radial-gradient(circle, transparent 14px, #000 14.5px);
  mask: radial-gradient(circle, transparent 14px, #000 14.5px);
}
.tri { position: absolute; left: 46px; top: 4px; width: 25px; height: 22px; }
.sel-side { width: 8px; background: linear-gradient(180deg, #000 0 8px, #3d3d3d 8px); flex: none; }
.sel-bars { height: 16px; margin-top: 1px; margin-right: 8px; flex: none; display: flex; flex-direction: column; gap: 1px; position: relative; }
.bar { height: 4.5px; background: #000; }
.b2 { background: linear-gradient(90deg, #000 62%, #7a4040 100%); }
.b3 { background: linear-gradient(90deg, #000 60%, #8a8a8a 100%); }
.bar-mark { position: absolute; left: 56px; top: 0; bottom: 0; width: 5px; border-left: 1px solid #aaa; border-right: 1px solid #aaa; }
.sel-foot { height: 8px; flex: none; padding-left: 1px; }
.sel-foot svg { width: 8px; height: 8px; display: block; color: #aaa; }
.handle { height: 4px; flex: none; margin: 0 auto; width: 10px; background: radial-gradient(circle, #777 .5px, transparent 1px) 0 0 / 2px 4px; }
.layer-opts { height: 10px; flex: none; display: flex; gap: 2px; }
.lay-combo { width: 105px; height: 10px; }
.filter { flex: 1; display: flex; align-items: center; justify-content: space-between; background: #444; padding-right: 2px; }
.filter svg { width: 8px; height: 8px; color: #bbb; }
.lay-op { height: 12px; flex: none; display: flex; margin-top: 2px; align-items: center; }
.lay-slider { width: 102px; height: 12px; }
.lay-op .spin { height: 12px; }
.lay-panel { width: 11px; height: 10px; margin-left: 3px; color: #ccc; }
.layers { height: 50px; flex: none; margin-top: 2px; background: #3d3d3d; margin-right: -1px; }
.layer { height: 13px; display: flex; align-items: center; }
.layer.sel { background: linear-gradient(90deg, #3d3d3d 0 24px, #4c7599 24px); color: #dfe6ec; }
.eye { width: 8px; height: 8px; margin: 0 4px 0 1px; flex: none; color: #ddd; }
.thumbn { width: 10px; height: 12px; flex: none; display: block; background: #fff; margin-right: 2px; }
.thumbn.white { width: 6px; margin-left: 2px; margin-right: 4px; }
.check { background: #fff conic-gradient(#ddd 0 25%, #fff 0 50%, #ddd 0 75%, #fff 0) 0 0 / 4px 4px; }
.lic { width: 9px; height: 7px; flex: none; color: #9a9a9a; }
.lic.dimmer { color: #6f8ca6; }
.layer:not(.sel) .lic.dimmer { color: #777; }
.lic.bright { color: #d8d8d8; }
.lname { flex: 1; text-align: center; color: #9a9a9a; padding-right: 8px; }
.lname.strong { font-weight: 700; color: #dfe6ec; font-size: 6.2px; }
.lay-actions { height: 14px; flex: none; display: flex; align-items: center; gap: 5.5px; padding: 0 3px; color: #cfcfcf; }
.lay-actions svg { width: 9px; height: 9px; flex: none; }
.lay-actions .dn { margin-left: -4px; margin-right: 1px; }
.preset-opts { height: 11px; flex: none; display: flex; align-items: center; gap: 3px; }
.pr-combo { width: 86px; height: 10px; }
.tag { display: flex; align-items: center; gap: 2px; width: 22px; color: #aaa; }
.tag-box { width: 4px; height: 6px; border: .7px solid #999; }
.pr-ic { width: 9px; height: 9px; color: #bbb; }
.presets { height: 38px; flex: none; display: flex; background: #3d3d3d; overflow: hidden; }
.pr-grid { width: 116px; flex: none; display: grid; grid-template-columns: repeat(5, 22.5px); grid-template-rows: 25px 13px; gap: 0 .5px; margin-left: 1px; }
.pr { display: block; background: #dcdcdc; border-bottom: 1px solid #3d3d3d; }
.pr svg { display: block; width: 100%; height: 100%; }
.pr.on { background: #7fb4d8; outline: 1px solid #2f5f86; outline-offset: -1px; }
.pr-scroll { flex: 1; display: flex; flex-direction: column; align-items: center; justify-content: space-between; padding: 2px 0; background: #444; }
.pr-thumb { width: 6px; height: 12px; background: #555; }
.search { height: 10px; flex: none; background: #3d3d3d; color: #777; padding-left: 2px; line-height: 10px; }
.snapshots { height: 42px; flex: none; background: #3a3a3a; }
.snap-actions { height: 15px; flex: none; display: flex; justify-content: center; align-items: center; gap: 24px; padding-right: 2px; }
.snap-btn { width: 12px; height: 12px; display: flex; align-items: center; justify-content: center; background: #505050; color: #ddd; border-radius: 1px; }
.snap-btn svg { width: 9px; height: 9px; }

/* status */
.status { height: 14px; flex: none; display: flex; align-items: center; background: #484848; color: #a8a8a8; position: relative; border-top: 1px solid #3e3e3e; font-size: 6.3px; white-space: nowrap; }
.st-ic { width: 8px; height: 8px; margin-left: 3px; border: 1px solid #aaa; flex: none; }
.st-brush { width: 113px; margin-left: 8px; flex: none; }
.st-space { width: 85px; flex: none; }
.st-prof { width: 193px; flex: none; }
.st-dim { width: 126px; flex: none; display: flex; align-items: center; }
.st-dim i { width: 3px; height: 9px; background: #4c7599; margin-right: -1px; }
.st-rot { width: 26px; flex: none; }
.st-rot i { width: 10px; height: 10px; border-radius: 50%; background: #2c2c2c; }
.st-ang { width: 54px; flex: none; }
.st-fit { width: 31px; flex: none; }
.st-zoom { width: 40px; height: 2px; flex: none; background: #333; position: relative; }
.st-zoom i { position: absolute; left: 0; top: 0; width: 7px; height: 2px; background: #5a85ad; }
.st-map { width: 7px; height: 8px; margin-left: 6px; flex: none; background: #cfe0c8; border: 1px solid #8bb; }
```
